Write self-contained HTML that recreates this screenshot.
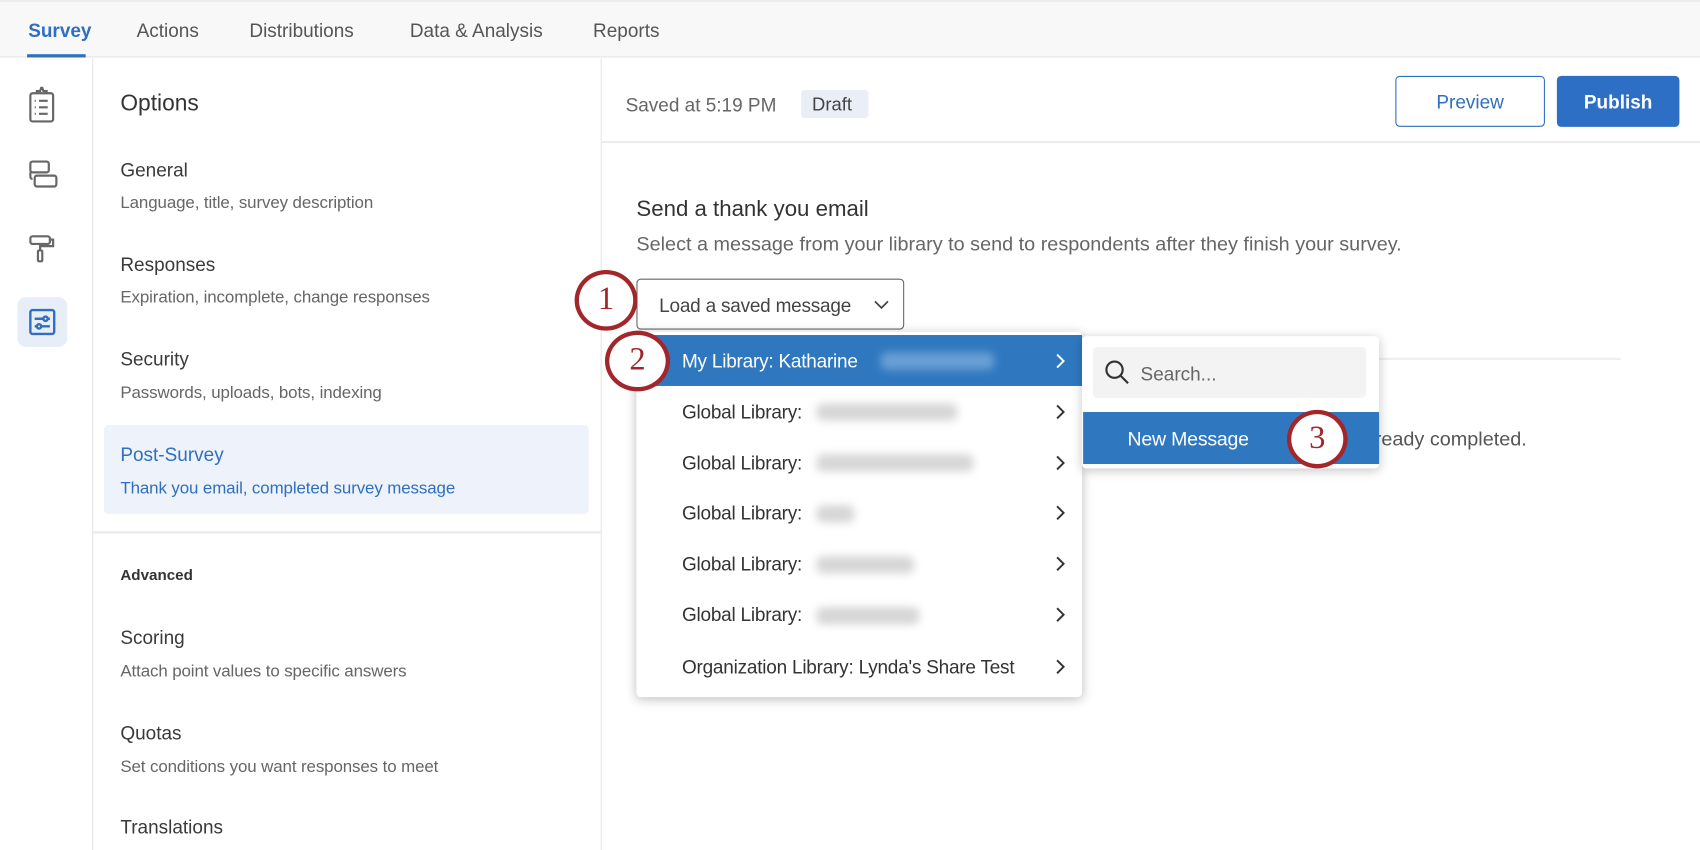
<!DOCTYPE html>
<html><head><meta charset="utf-8"><style>
*{margin:0;padding:0;box-sizing:border-box}
html,body{width:1700px;height:850px;overflow:hidden;background:#fff}
#w{position:absolute;left:0;top:0;width:1568px;height:784px;transform:scale(1.08418);transform-origin:0 0;font-family:"Liberation Sans",sans-serif;color:#333}
.a{position:absolute}
.t{position:absolute;white-space:nowrap;line-height:20px}
.ti{font-size:17.5px;color:#3a3a3a}
.su{font-size:15.6px;color:#666;letter-spacing:-0.1px}
.blur{position:absolute;height:16px;background:#d6d6d6;filter:blur(4px);border-radius:6px}
.row{position:absolute;left:587px;width:411px;height:47px}
.row .l{position:absolute;left:42px;top:14px;font-size:17.5px;color:#333;line-height:20px;white-space:nowrap;letter-spacing:-0.2px}
.chev{position:absolute;left:386px;top:17px}
.circ{position:absolute;border:4px solid #a3262a;border-radius:50%;background:#fff;color:#a3262a;font-family:"Liberation Serif",serif;font-size:30px;text-align:center}
</style></head><body><div id="w">
<!-- top nav -->
<div class="a" style="left:0;top:0;width:1568px;height:53px;background:#f8f8f8;border-bottom:1px solid #e4e4e4"></div>
<div class="a" style="left:0;top:0;width:1568px;height:2px;background:#ececec"></div>
<div class="t" style="left:26px;top:18px;font-size:17.5px;font-weight:bold;color:#2f6fbf">Survey</div>
<div class="a" style="left:25px;top:50px;width:54px;height:3px;background:#2f6fbf"></div>
<div class="t" style="left:126px;top:18px;font-size:17.5px;color:#555">Actions</div>
<div class="t" style="left:230px;top:18px;font-size:17.5px;color:#555">Distributions</div>
<div class="t" style="left:378px;top:18px;font-size:17.5px;color:#555">Data &amp; Analysis</div>
<div class="t" style="left:547px;top:18px;font-size:17.5px;color:#555">Reports</div>
<!-- left rail -->
<div class="a" style="left:85px;top:54px;width:1px;height:730px;background:#e6e6e6"></div>
<svg class="a" style="left:20px;top:78px" width="40" height="250" viewBox="0 0 40 250" fill="none" stroke="#666" stroke-width="2">
<rect x="8" y="8" width="21" height="26" rx="2"/><path d="M14 8v-2h3l1-3h1l1 3h3v2"/><path d="M12 15h1M16 15h8M12 21h1M16 21h8M12 27h1M16 27h8"/>
<rect x="8" y="71" width="17" height="10" rx="2"/><path d="M8 81v4a2 2 0 0 0 2 2"/><rect x="12" y="84" width="20" height="10" rx="2"/>
<rect x="8" y="140" width="18" height="7" rx="2"/><path d="M26 143h3v6h-12v4"/><rect x="15" y="153" width="4" height="10" rx="1"/>
</svg>
<div class="a" style="left:16px;top:274px;width:46px;height:46px;border-radius:8px;background:#e8eef8"></div>
<svg class="a" style="left:26px;top:284px" width="26" height="26" viewBox="0 0 26 26" fill="none" stroke="#2f6fbf" stroke-width="2.2">
<rect x="2" y="2" width="22" height="22" rx="2"/><path d="M6 10h8M18 10h2M6 17h2M12 17h8"/><circle cx="16" cy="10" r="2"/><circle cx="10" cy="17" r="2"/>
</svg>
<!-- options panel -->
<div class="a" style="left:554px;top:54px;width:1px;height:730px;background:#e6e6e6"></div>
<div class="t" style="left:111px;top:84px;font-size:21px;color:#333;line-height:24px">Options</div>
<div class="t ti" style="left:111px;top:147px">General</div>
<div class="t su" style="left:111px;top:178px">Language, title, survey description</div>
<div class="t ti" style="left:111px;top:234px">Responses</div>
<div class="t su" style="left:111px;top:265px">Expiration, incomplete, change responses</div>
<div class="t ti" style="left:111px;top:321px">Security</div>
<div class="t su" style="left:111px;top:353px">Passwords, uploads, bots, indexing</div>
<div class="a" style="left:96px;top:392px;width:447px;height:82px;background:#edf2fb;border-radius:4px"></div>
<div class="t ti" style="left:111px;top:409px;color:#2f6fbf">Post-Survey</div>
<div class="t su" style="left:111px;top:441px;color:#2f6fbf">Thank you email, completed survey message</div>
<div class="a" style="left:85px;top:490px;width:469px;height:2px;background:#eaeaea"></div>
<div class="t" style="left:111px;top:520px;font-size:14px;font-weight:bold;color:#333">Advanced</div>
<div class="t ti" style="left:111px;top:578px">Scoring</div>
<div class="t su" style="left:111px;top:610px">Attach point values to specific answers</div>
<div class="t ti" style="left:111px;top:666px">Quotas</div>
<div class="t su" style="left:111px;top:698px">Set conditions you want responses to meet</div>
<div class="t ti" style="left:111px;top:753px">Translations</div>
<!-- main header -->
<div class="a" style="left:555px;top:130px;width:1013px;height:2px;background:#ececec"></div>
<div class="t" style="left:577px;top:87px;font-size:17.5px;color:#666">Saved at 5:19 PM</div>
<div class="a" style="left:739px;top:83px;width:62px;height:26px;background:#e9eef7;border-radius:3px"></div>
<div class="t" style="left:749px;top:87px;font-size:17px;color:#444">Draft</div>
<div class="a" style="left:1287px;top:70px;width:138px;height:47px;border:1.5px solid #2f6fbf;border-radius:4px;color:#2f6fbf;font-size:17.5px;text-align:center;line-height:46px">Preview</div>
<div class="a" style="left:1436px;top:70px;width:113px;height:47px;background:#2e6fc6;border-radius:4px;color:#fff;font-size:17.5px;font-weight:bold;text-align:center;line-height:48px">Publish</div>
<!-- content -->
<div class="t" style="left:587px;top:182px;font-size:20.5px;color:#333;line-height:22px">Send a thank you email</div>
<div class="t" style="left:587px;top:215px;font-size:18.3px;color:#666">Select a message from your library to send to respondents after they finish your survey.</div>
<div class="a" style="left:587px;top:257px;width:247px;height:47px;border:1.5px solid #666;border-radius:4px"></div>
<div class="t" style="left:608px;top:272px;font-size:17.5px;color:#444;letter-spacing:-0.2px">Load a saved message</div>
<svg class="a" style="left:806px;top:277px" width="14" height="9"><path d="M1 1l6 6 6-6" fill="none" stroke="#444" stroke-width="1.6"/></svg>
<div class="a" style="left:998px;top:330px;width:497px;height:2px;background:#eee"></div>
<div class="t" style="left:1268px;top:395px;font-size:18.3px;color:#555">ready completed.</div>
<!-- menu -->
<div class="a" style="left:587px;top:306px;width:411px;height:337px;background:#fff;border-radius:4px;box-shadow:0 2px 10px rgba(0,0,0,.25)"></div>
<div class="row" style="top:309px;background:#2f78c0"><div class="l" style="color:#fff">My Library: Katharine</div><svg class="chev" width="10" height="14"><path d="M2 1l6 6-6 6" fill="none" stroke="#fff" stroke-width="1.8"/></svg></div>
<div class="blur" style="left:812px;top:325px;width:105px;background:#6a9fd4"></div>
<div class="row" style="top:356px"><div class="l">Global Library:</div><svg class="chev" width="10" height="14"><path d="M2 1l6 6-6 6" fill="none" stroke="#333" stroke-width="1.8"/></svg></div>
<div class="blur" style="left:753px;top:372px;width:130px"></div>
<div class="row" style="top:403px"><div class="l">Global Library:</div><svg class="chev" width="10" height="14"><path d="M2 1l6 6-6 6" fill="none" stroke="#333" stroke-width="1.8"/></svg></div>
<div class="blur" style="left:753px;top:419px;width:145px"></div>
<div class="row" style="top:449px"><div class="l">Global Library:</div><svg class="chev" width="10" height="14"><path d="M2 1l6 6-6 6" fill="none" stroke="#333" stroke-width="1.8"/></svg></div>
<div class="blur" style="left:753px;top:466px;width:35px"></div>
<div class="row" style="top:496px"><div class="l">Global Library:</div><svg class="chev" width="10" height="14"><path d="M2 1l6 6-6 6" fill="none" stroke="#333" stroke-width="1.8"/></svg></div>
<div class="blur" style="left:753px;top:513px;width:90px"></div>
<div class="row" style="top:543px"><div class="l">Global Library:</div><svg class="chev" width="10" height="14"><path d="M2 1l6 6-6 6" fill="none" stroke="#333" stroke-width="1.8"/></svg></div>
<div class="blur" style="left:753px;top:560px;width:95px"></div>
<div class="row" style="top:591px"><div class="l">Organization Library: Lynda's Share Test</div><svg class="chev" width="10" height="14"><path d="M2 1l6 6-6 6" fill="none" stroke="#333" stroke-width="1.8"/></svg></div>
<!-- submenu -->
<div class="a" style="left:998px;top:310px;width:274px;height:122px;background:#fff;border-radius:4px;box-shadow:0 2px 10px rgba(0,0,0,.22)"></div>
<div class="a" style="left:1008px;top:320px;width:252px;height:47px;background:#f3f3f3;border-radius:4px"></div>
<svg class="a" style="left:1018px;top:331px" width="26" height="26" viewBox="0 0 26 26" fill="none" stroke="#333" stroke-width="2"><circle cx="10" cy="10" r="7.5"/><path d="M15.5 15.5l7 7"/></svg>
<div class="t" style="left:1052px;top:335px;font-size:17.5px;color:#666">Search...</div>
<div class="a" style="left:999px;top:380px;width:273px;height:48px;background:#2f78c0"></div>
<div class="t" style="left:1040px;top:395px;font-size:18px;color:#fff;letter-spacing:-0.2px">New Message</div>
<!-- circles -->
<div class="circ" style="left:530px;top:249px;width:58px;height:56px;line-height:46px">1</div>
<div class="circ" style="left:558px;top:305px;width:60px;height:56px;line-height:46px">2</div>
<div class="circ" style="left:1187px;top:378px;width:56px;height:54px;line-height:44px">3</div>
</div></body></html>
